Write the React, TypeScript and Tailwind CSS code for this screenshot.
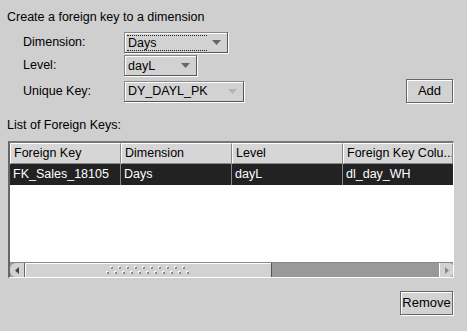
import React from "react";

const Arrow = ({ disabled = false }: { disabled?: boolean }) => (
  <svg width="9" height="5" viewBox="0 0 9 5" className="shrink-0">
    <path d="M0 0 H9 L4.5 5 Z" fill={disabled ? "#b4b4b4" : "#666"} />
  </svg>
);

const Combo = ({
  value,
  width,
  focused = false,
  disabled = false,
}: {
  value: string;
  width: string;
  focused?: boolean;
  disabled?: boolean;
}) => (
  <div
    className={`${width} h-[21px] border border-t-[#888] border-l-[#888] border-b-[#555] border-r-[#555] bg-[#d2d2d2] shadow-[inset_1px_1px_0_#fff,1px_1px_0_#fff]`}
  >
    <div className="flex h-full items-center pl-[2px] pr-[6px]">
      <span
        className={`flex-1 leading-[14px] pl-[1px] ${
          focused ? "border-y border-dotted border-[#222] mr-[5px]" : ""
        }`}
      >
        {value}
      </span>
      <Arrow disabled={disabled} />
    </div>
  </div>
);

const Button = ({ label, width }: { label: string; width: string }) => (
  <button
    className={`${width} h-[24px] border border-[#666] bg-[#d2d2d2] shadow-[inset_1px_1px_0_#fff,1px_1px_0_#fff] text-[13px] text-black`}
  >
    {label}
  </button>
);

const columns = ["Foreign Key", "Dimension", "Level", "Foreign Key Colu..."];
const row = ["FK_Sales_18105", "Days", "dayL", "dl_day_WH"];

export default function App() {
  return (
    <div
      className="w-[467px] h-[331px] bg-[#cfcfcf] text-[12.5px] text-black"
      style={{ fontFamily: '"Liberation Sans", Arial, sans-serif' }}
    >
      {/* Header: form */}
      <div className="pt-[10px] pl-[7px] leading-[15px]">Create a foreign key to a dimension</div>

      <div className="mt-[7px] pl-[23px] pr-[14px] flex flex-col">
        <div className="flex items-center">
          <span className="w-[101px]">Dimension:</span>
          <Combo value="Days" width="w-[104px]" focused />
        </div>
        <div className="flex items-center mt-[2px]">
          <span className="w-[101px]">Level:</span>
          <Combo value="dayL" width="w-[73px]" />
        </div>
        <div className="flex items-center mt-[3px]">
          <span className="w-[101px]">Unique Key:</span>
          <Combo value="DY_DAYL_PK" width="w-[120px]" disabled />
          <div className="flex-1" />
          <Button label="Add" width="w-[47px]" />
        </div>
      </div>

      <div className="mt-[15px] pl-[7px] leading-[15px]">List of Foreign Keys:</div>

      {/* Table */}
      <div className="mt-[8px] ml-[8px] w-[446px] h-[137px] border-2 border-t-[#777] border-l-[#666] border-b-white border-r-white border-b-[1px] border-r-[1px] bg-white flex flex-col">
        <div className="flex h-[21px] bg-[#d6d6d6]">
          {columns.map((c, i) => (
            <div
              key={c}
              className={`${
                i === 3 ? "flex-1" : "w-[111px]"
              } border-t border-l border-t-white border-l-white border-r border-b border-r-[#888] border-b-[#888] pl-[3px] leading-[19px] whitespace-nowrap overflow-hidden`}
            >
              {c}
            </div>
          ))}
        </div>
        <div className="flex h-[21px] bg-[#222] text-white">
          {row.map((c, i) => (
            <div
              key={c}
              className={`${
                i === 3 ? "flex-1" : "w-[111px] border-r border-[#888]"
              } pl-[3px] leading-[21px]`}
            >
              {c}
            </div>
          ))}
        </div>
        <div className="flex-1" />
        {/* Horizontal scrollbar */}
        <div className="h-[15px] flex bg-[#999] border-t border-[#888]">
          <div className="w-[15px] bg-[#d2d2d2] border-r border-[#666] flex items-center justify-center rounded-l-[6px]">
            <svg width="4" height="7" viewBox="0 0 4 7">
              <path d="M4 0 V7 L0 3.5 Z" fill="#444" />
            </svg>
          </div>
          <div className="w-[247px] bg-[#d2d2d2] border-r border-[#555] shadow-[inset_1px_1px_0_#fff] flex items-center justify-center">
            <svg width="84" height="8" viewBox="0 0 84 8">
              {Array.from({ length: 10 }).map((_, i) => (
                <g key={`a${i}`}>
                  <rect x={4 + i * 8} y={0} width={2} height={2} fill="#fff" />
                  <rect x={5 + i * 8} y={1} width={2} height={2} fill="#8a8a8a" />
                  <rect x={4 + i * 8} y={0} width={1} height={1} fill="#fff" />
                </g>
              ))}
              {Array.from({ length: 11 }).map((_, i) => (
                <g key={`b${i}`}>
                  <rect x={i * 8} y={5} width={2} height={2} fill="#fff" />
                  <rect x={1 + i * 8} y={6} width={2} height={2} fill="#8a8a8a" />
                  <rect x={i * 8} y={5} width={1} height={1} fill="#fff" />
                </g>
              ))}
            </svg>
          </div>
          <div className="flex-1" />
          <div className="w-[14px] bg-[#d2d2d2] border-l border-white flex items-center justify-center rounded-r-[4px]">
            <svg width="4" height="7" viewBox="0 0 4 7">
              <path d="M0 0 V7 L4 3.5 Z" fill="#888" />
            </svg>
          </div>
        </div>
      </div>

      <div className="mt-[13px] pr-[14px] flex justify-end">
        <Button label="Remove" width="w-[53px]" />
      </div>
    </div>
  );
}
